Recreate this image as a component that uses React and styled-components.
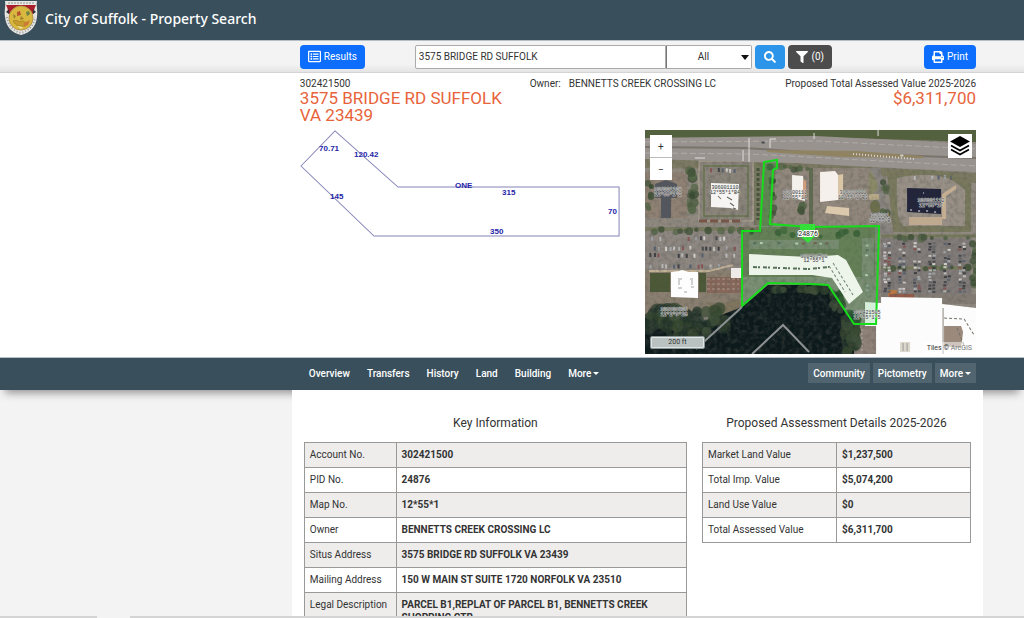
import React, { useState } from 'react';
import styled, { createGlobalStyle } from 'styled-components';
import { FaFilter, FaPrint, FaRegListAlt, FaSearch } from 'react-icons/fa';

const keyInformation = [
  ['Account No.', '302421500'],
  ['PID No.', '24876'],
  ['Map No.', '12*55*1'],
  ['Owner', 'BENNETTS CREEK CROSSING LC'],
  ['Situs Address', '3575 BRIDGE RD SUFFOLK VA 23439'],
  ['Mailing Address', '150 W MAIN ST SUITE 1720 NORFOLK VA 23510'],
  ['Legal Description', 'PARCEL B1,REPLAT OF PARCEL B1, BENNETTS CREEK SHOPPING CTR'],
];

const assessment = [
  ['Market Land Value', '$1,237,500'],
  ['Total Imp. Value', '$5,074,200'],
  ['Land Use Value', '$0'],
  ['Total Assessed Value', '$6,311,700'],
];

const tabs = ['Overview', 'Transfers', 'History', 'Land', 'Building'];

// small repeatable random generator, so the map looks the same on every render
const makeRandom = (seed) => {
  let s = seed * 7919;
  return () => {
    s = (s * 16807) % 2147483647;
    return s / 2147483647;
  };
};

const carColors = ['#d4d2cf', '#bcbcbc', '#45484d', '#566070', '#865453', '#3b3d42', '#a8abb0', '#64676c'];
const treeColors = ['#3f5137', '#4a5d3e', '#364a2f', '#566848'];
const shoreColors = ['#2b3c2b', '#35482f', '#22332a', '#3c4f38'];

const parkCars = (seed, x, y, w, h, dx, dy, fill = 0.6) => {
  const rand = makeRandom(seed);
  const cars = [];
  for (let cy = y; cy < y + h; cy += dy) {
    for (let cx = x; cx < x + w; cx += dx) {
      if (rand() < fill) {
        cars.push({ x: cx + rand(), y: cy + rand(), color: carColors[Math.floor(rand() * carColors.length)] });
      }
    }
  }
  return cars;
};

const plantTrees = (seed, x, y, w, h, count, size, colors = treeColors) => {
  const rand = makeRandom(seed);
  return Array.from({ length: count }, () => ({
    x: x + rand() * w,
    y: y + rand() * h,
    r: size * (0.6 + rand() * 0.7),
    color: colors[Math.floor(rand() * colors.length)],
  }));
};

const wideCars = [
  ...parkCars(11, 2, 106, 92, 4, 4, 6, 0.3),
  ...parkCars(31, 4, 116, 90, 4, 4, 6, 0.7),
  ...parkCars(33, 4, 123, 90, 4, 4, 6, 0.6),
  ...parkCars(35, 4, 134, 90, 4, 4, 6, 0.4),
  ...parkCars(71, 64, 38, 26, 4, 4, 6, 0.7),
  ...parkCars(83, 268, 45, 38, 4, 6, 6, 0.5),
];

const roadCars = [
  ...parkCars(91, 40, 11, 280, 4, 38, 8, 0.5),
  ...parkCars(92, 20, 24, 290, 4, 47, 8, 0.5),
];

const lotCars = [17, 29, 41, 53, 67, 79].flatMap((seed, i) => [
  ...parkCars(seed, 238 + i * 15, 112, 3, 50, 5, 3, 0.75),
  ...parkCars(seed + 5, 242 + i * 15, 112, 3, 50, 5, 3, 0.65),
]);

const mallCars = [
  ...parkCars(99, 108, 112, 90, 4, 6, 6, 0.4),
  ...parkCars(101, 220, 114, 5, 46, 6, 5, 0.4),
];

const trees = [
  ...plantTrees(7, 44, 36, 6, 50, 18, 4),
  ...plantTrees(13, 0, 50, 7, 34, 8, 3),
  ...plantTrees(19, 125, 36, 4, 56, 16, 3),
  ...plantTrees(23, 136, 36, 30, 4, 8, 3),
  ...plantTrees(37, 4, 99, 92, 3, 12, 3),
  ...plantTrees(43, 237, 42, 5, 50, 8, 3),
  ...plantTrees(47, 246, 107, 84, 2, 12, 3),
  ...plantTrees(59, 240, 137, 88, 2, 12, 3),
  ...plantTrees(61, 106, 99, 116, 8, 16, 3),
  ...plantTrees(73, 327, 110, 4, 56, 12, 3),
  ...plantTrees(79, 151, 74, 8, 8, 6, 4),
];

const shoreTrees = [
  ...plantTrees(107, 2, 178, 78, 20, 60, 6, shoreColors),
  ...plantTrees(108, 22, 196, 40, 14, 20, 5, shoreColors),
  ...plantTrees(109, 118, 158, 64, 3, 20, 4, shoreColors),
  ...plantTrees(113, 200, 182, 12, 42, 40, 5, shoreColors),
  ...plantTrees(127, 187, 160, 10, 24, 16, 4, shoreColors),
];

const Cars = ({ items, wide }) => (
  <g>
    {items.map((car, i) => (
      <rect key={i} x={car.x} y={car.y} width={wide ? 3 : 2} height={wide ? 2 : 4} fill={car.color} />
    ))}
  </g>
);

const Trees = ({ items }) => (
  <g>
    {items.map((tree, i) => (
      <circle key={i} cx={tree.x} cy={tree.y} r={tree.r} fill={tree.color} opacity="0.75" />
    ))}
  </g>
);

const CityLogo = () => (
  <LogoSvg viewBox="0 0 34 36" role="img" aria-label="City of Suffolk seal">
    <path d="M1 1h32c-1 5 1 9 0 16-1 10-7 16-16 18C8 33 2 27 1 17 0 10 2 6 1 1z" fill="#e9e7e2" />
    <path d="M2 5h30c-2 3-2 7-3 10H5C4 12 4 8 2 5z" fill="#a81f2b" />
    <path d="M4 3h26" stroke="#8c9094" strokeDasharray="2 1" />
    <path d="M2 14c-1 9 5 17 15 20 10-3 16-11 15-20z" fill="#e4e2df" />
    <circle cx="17" cy="18" r="12" fill="#d9b840" stroke="#b5974a" />
    <path d="M3 17c1 8 6 14 14 16 8-2 13-8 14-16" fill="none" stroke="#9a9c9f" strokeWidth="2" strokeDasharray="1 2" />
    <path d="M13 12l3-1 1 4-4 1z" fill="#b9512f" />
    <path d="M22 12l3-1 1 3-3 2z" fill="#668045" />
    <path d="M9 14l3 2-2 3zM17 16l3 3-4 1z" fill="#9b7f2b" />
    <path d="M9 21c4-2 7 2 10 0l4 2-3 3c-4 1-8 0-11-5z" fill="#c79b2d" stroke="#94781f" strokeWidth="0.600" />
    <path d="M20 23l6-3-2 5-4 2z" fill="#cc7a35" />
    <path d="M13 26l6 1-2 2z" fill="#efe3a8" />
    <path d="M2 12l3-3v5zM32 12l-3-3v5z" fill="#2e3236" />
  </LogoSvg>
);

const BuildingSketch = () => (
  <SketchSvg viewBox="0 0 320 107" role="img" aria-label="Building sketch">
    <path d="M1 36L35 1l63 56h221v49H74z" fill="none" stroke="#8584b8" />
    <g fill="#2525a8" fontFamily='"Liberation Sans", Arial, sans-serif' fontSize="8" fontWeight="700">
      <text x="19" y="21">70.71</text>
      <text x="54" y="27">120.42</text>
      <text x="30" y="69">145</text>
      <text x="155" y="58">ONE</text>
      <text x="202" y="65">315</text>
      <text x="308" y="84">70</text>
      <text x="190" y="104">350</text>
    </g>
  </SketchSvg>
);

const AerialMap = () => (
  <AerialSvg viewBox="0 0 331 224" preserveAspectRatio="xMidYMid slice" role="img" aria-label="Aerial view of the parcel">
    <defs>
      <filter id="grain" x="0" y="0" width="100%" height="100%">
        <feTurbulence type="fractalNoise" baseFrequency="0.22" numOctaves="3" seed="4" />
        <feColorMatrix values="0 0 0 0 0.1  0 0 0 0 0.1  0 0 0 0 0.08  1.500 0 0 0 -0.620" />
      </filter>
    </defs>
    <rect width="331" height="224" fill="#8f8980" />

    {/* ground */}
    <path d="M0 28l150 5 181 10v10L150 40 0 38z" fill="#7c7a62" />
    <path d="M0 42h42v46H0z" fill="#8f8174" />
    <path d="M54 31h54v60H54z" fill="#8a847b" stroke="#b5aa9a" />
    <path d="M59 36h44v50H59z" fill="none" stroke="#6f7858" strokeWidth="2" />
    <path d="M109 33h9v62h-9z" fill="#77795f" />
    <path d="M113 38v52" stroke="#45523a" strokeWidth="3" strokeDasharray="3 2" />
    <path d="M119 34h12l-3 62h-12z" fill="#71805a" />
    <path d="M134 38h94v56h-94z" fill="#91877c" />
    <path d="M166 38v56" stroke="#606b50" strokeWidth="4" />
    <path d="M225 38h10l12 66h-16z" fill="#898581" />
    <path d="M242 42q60-8 84 12v48h-78z" fill="#78795d" />
    <path d="M252 48q38-8 58 4l10 8v36h-62q-8-6-6-48z" fill="#989087" />
    <path d="M0 96h97v44H0z" fill="#8d8681" />
    <path d="M54 91h44" stroke="#7a5546" strokeWidth="3" strokeDasharray="8 3" />
    <path d="M0 99h97" stroke="#7b7c62" strokeWidth="4" />
    <path d="M98 97h132v50H98z" fill="#77785f" />
    <path d="M104 110h90v9h-90zM217 108h12v56h-12z" fill="#8c867d" />
    <path d="M236 108h90v56h-90z" fill="#817b79" />
    <path d="M236 106h95M236 138h90" stroke="#75795a" strokeWidth="3" />
    <path d="M224 40q8 8 9 18-2 6-9 6z" fill="#8a8a68" />
    <path d="M224 64h10v6h-10z" fill="#b7a988" />
    <ellipse cx="230" cy="77" rx="5" ry="7" fill="#6b6f4c" />
    <path d="M0 140h97v46H0z" fill="#8a7f70" />
    <path d="M5 143h20v19H5zM54 143h7v19h-7z" fill="#4b5836" />
    <path d="M62 147h34v16H62z" fill="#86675a" />
    <path d="M62 149h32M62 154h32M62 159h32" stroke="#b09a8d" strokeDasharray="3 2" />
    <path d="M4 141h60l24-6" stroke="#c2b296" strokeWidth="2" fill="none" />
    <path d="M60 171l12 4 22-6 3 8-20 12z" fill="#80765f" />
    <path d="M236 164h95v10h-95z" fill="#837c74" />
    <path d="M243 160h9v6h-9z" fill="#b87742" />
    <path d="M244 164h25v5h-25z" fill="#955b48" />

    {/* water */}
    <path d="M0 188l58 4 39-15 26-22h60l27 41v28H0z" fill="#0d1a1c" />
    <path d="M209 196h22v28h-22z" fill="#8f8279" />
    <path d="M212 199v24M217 199v24" stroke="#b8aea5" strokeDasharray="2 2" />

    <Trees items={trees} />
    <Trees items={shoreTrees} />
    <Cars items={wideCars} />
    <Cars items={lotCars} wide />
    <Cars items={mallCars} wide />
    <rect width="331" height="224" filter="url(#grain)" opacity="0.6" />

    {/* highway */}
    <path d="M0 0h331v12L170 7 0 8z" fill="#54613f" />
    <path d="M0 8l170-2 161 8v28L150 33 0 29z" fill="#98938f" />
    <path d="M0 17l100 1 60 4 171 6" stroke="#7a746d" strokeWidth="2" fill="none" />
    <path d="M122 21l90 1 66 5-80-1z" fill="#8f8362" stroke="#8f8362" strokeWidth="2" />
    <path d="M0 12l170-1 161 8M0 23l105 1 226 12" stroke="#aeaaa6" fill="none" strokeDasharray="6 3" />
    <path d="M208 24l62 5" stroke="#d8d4cf" strokeWidth="2" strokeDasharray="1 2" />
    <path d="M104 8v24M98 20v11M125 9h6M125 9v9M169 3v6M50 28h10M233 0v6" stroke="#e0dedb" fill="none" />
    <Cars items={roadCars} wide />

    {/* buildings */}
    <path d="M10 54l11-4 11 4v14h-6v20H16V68h-6z" fill="#54565d" />
    <path d="M66 53l28 1-1 26-8-2-19-1z" fill="#f6f5f3" />
    <path d="M73 66l3 3M82 67l5 3M85 73l4 3M88 78l3 1" stroke="#68645f" />
    <path d="M147 45l11 1 2 25-8-2-5-2z" fill="#f4f0eb" />
    <path d="M158 50l3 1v18h-3z" fill="#cf9d7c" />
    <path d="M175 42l15-1 3 4v25l-18 2z" fill="#f5f0eb" />
    <path d="M193 45l5-1v20l-5 6z" fill="#dac6a6" />
    <path d="M182 76l22 2v8l-24-3z" fill="#dcc9ad" />
    <path d="M262 58l34 1v25l-34-2z" fill="#23263b" />
    <path d="M264 87h33v8h-33z" fill="#bfa98f" />
    <path d="M297 64l14-9v4l-10 7v23h-4z" fill="#c4ae91" />
    <path d="M265 80h2M273 81h2M281 81h2M289 82h2M278 63h1" stroke="#eee" />
    <path d="M26 142l8-1 3-1 7 2h9v26l-27-1z" fill="#fdfdfd" />
    <path d="M33 149h4M45 149h3M33 158h4M39 162h3M46 157h3M34 150v5M47 150v5" stroke="#a5a5a5" />
    <path d="M86 138h12v10H86z" fill="#eeeae8" />
    <path d="M220 172l16 1v-6l61 1v6l34 4v46H231v-28h-11z" fill="#fcfcfc" />
    <path d="M298 178v46" stroke="#8b857d" />
    <path d="M299 196h17l2 6-2 16-17-2z" fill="#9b897b" />
    <path d="M299 188l20 1 10 16M312 198l8 20" stroke="#747069" fill="none" strokeDasharray="3 2" />
    <path d="M255 212h10v10h-10z" fill="#ddd8cc" />
    <path d="M258 213v8M262 213v8" stroke="#999" />

    {/* parcel outline */}
    <path
      d="M119 32l13-2v8l-4 2-3 54 40 3 69-1-3 98h-22l-26-39-18-1-42-1-26 23V101h18z"
      fill="#0fae30"
      fillOpacity="0.16"
    />
    <path d="M104 124l60 3 29-2 8 5 17 32-14 12-17-26-20-3h-63z" fill="#edf5ea" />
    <path d="M108 137l56 2 20-2" stroke="#57715a" strokeWidth="2" fill="none" strokeDasharray="4 1 2 3" />
    <path d="M188 133l20 32M184 136l16 26" stroke="#6d846f" fill="none" strokeDasharray="3 2" />
    <path
      d="M119 32l13-2v8l-4 2-3 54 40 3 69-1-3 98h-22l-26-39-18-1-42-1-26 23V101h18z"
      fill="none"
      stroke="#16dc1c"
      strokeWidth="2"
    />
    <path d="M97 177l-46 42M107 224l31-29 26 27" stroke="#8d9192" strokeWidth="2" fill="none" />

    {/* parcel numbers */}
    <g fill="#3a3e40" stroke="#e4e4e4" strokeWidth="0.600" paintOrder="stroke" fontFamily='"Liberation Mono", monospace' fontSize="5" textAnchor="middle">
      <text x="23" y="61">306001108</text>
      <text x="23" y="66">12*55*1*2</text>
      <text x="80" y="59">306001110</text>
      <text x="80" y="64">12*55*1*B4</text>
      <text x="150" y="64">30600111</text>
      <text x="150" y="69">12*55*1A</text>
      <text x="208" y="64">306001111</text>
      <text x="208" y="69">12*55*1*B2</text>
      <text x="235" y="87">306001</text>
      <text x="235" y="92">12*55*B</text>
      <text x="286" y="72">306001112</text>
      <text x="286" y="77">12*55*1C</text>
      <text x="169" y="128">302421500</text>
      <text x="169" y="132">12*55*1</text>
      <text x="29" y="181">303909806</text>
      <text x="29" y="186">12*2*9*2G</text>
      <text x="222" y="184">302421505</text>
      <text x="222" y="189">12*55*1*5</text>
    </g>
    <path d="M155 94h15v12l-7 7-8-7z" fill="#35df3a" />
    <text x="163" y="106" textAnchor="middle" fontFamily="Roboto, sans-serif" fontSize="7" fill="#222" stroke="#fff" strokeWidth="2" paintOrder="stroke">
      24876
    </text>
  </AerialSvg>
);

const RecordTable = ({ title, rows, labelWidth }) => (
  <section>
    <SectionTitle>{title}</SectionTitle>
    <Table>
      <tbody>
        {rows.map(([label, value]) => (
          <tr key={label}>
            <LabelCell scope="row" $width={labelWidth}>{label}</LabelCell>
            <ValueCell>{value}</ValueCell>
          </tr>
        ))}
      </tbody>
    </Table>
  </section>
);

const App = () => {
  const [query, setQuery] = useState('3575 BRIDGE RD SUFFOLK');
  const [scope, setScope] = useState('All');

  return (
    <Page>
      <GlobalStyle />
      <Header>
        <CityLogo />
        <SiteTitle>City of Suffolk - Property Search</SiteTitle>
      </Header>

      <Toolbar>
        <div>
          <PrimaryButton type="button">
            <FaRegListAlt size={13} />
            Results
          </PrimaryButton>
        </div>
        <SearchForm onSubmit={(e) => e.preventDefault()}>
          <SearchInput aria-label="Search" value={query} onChange={(e) => setQuery(e.target.value)} />
          <SelectWrap>
            <ScopeSelect aria-label="Search in" value={scope} onChange={(e) => setScope(e.target.value)}>
              <option>All</option>
              <option>Owner</option>
              <option>Address</option>
            </ScopeSelect>
            <SelectArrow />
          </SelectWrap>
          <SearchButton type="submit" aria-label="Search">
            <FaSearch size={12} />
          </SearchButton>
          <FilterButton type="button">
            <FaFilter size={12} />
            (0)
          </FilterButton>
        </SearchForm>
        <PrintWrap>
          <PrimaryButton type="button">
            <FaPrint size={12} />
            Print
          </PrimaryButton>
        </PrintWrap>
      </Toolbar>

      <Summary>
        <Facts>
          <div>
            <Small>302421500</Small>
            <Highlight>3575 BRIDGE RD SUFFOLK VA 23439</Highlight>
          </div>
          <OwnerLine>
            <span>Owner:</span>
            <span>BENNETTS CREEK CROSSING LC</span>
          </OwnerLine>
          <ValueBlock>
            <Small>Proposed Total Assessed Value 2025-2026</Small>
            <Highlight as="p">$6,311,700</Highlight>
          </ValueBlock>
        </Facts>
        <Media>
          <BuildingSketch />
          <MapFrame>
            <AerialMap />
            <ZoomControls>
              <ZoomButton type="button" aria-label="Zoom in">+</ZoomButton>
              <ZoomButton type="button" aria-label="Zoom out">−</ZoomButton>
            </ZoomControls>
            <LayersButton type="button" aria-label="Layers">
              <svg viewBox="0 0 22 22" width="22" height="22">
                <path d="M11 1l10 5.500-10 5.500L1 6.500z" fill="#000" />
                <path d="M2 10.500l9 5 9-5M2 14.500l9 5 9-5" fill="none" stroke="#000" strokeWidth="1.800" />
              </svg>
            </LayersButton>
            <ScaleBar>200 ft</ScaleBar>
            <Attribution>
              Tiles © <a href="#arcgis">ArcGIS</a>
            </Attribution>
          </MapFrame>
        </Media>
      </Summary>

      <NavBar>
        <NavGroup>
          {tabs.map((tab) => (
            <NavLink key={tab} href={`#${tab.toLowerCase()}`}>{tab}</NavLink>
          ))}
          <NavButton type="button">More<Caret /></NavButton>
        </NavGroup>
        <ToolGroup>
          <ToolButton type="button">Community</ToolButton>
          <ToolButton type="button">Pictometry</ToolButton>
          <ToolButton type="button">More<Caret /></ToolButton>
        </ToolGroup>
      </NavBar>

      <Details>
        <Panel>
          <RecordTable title="Key Information" rows={keyInformation} labelWidth="24%" />
          <RecordTable title="Proposed Assessment Details 2025-2026" rows={assessment} labelWidth="50%" />
        </Panel>
      </Details>
      <BottomStrip>
        <StripGap />
      </BottomStrip>
    </Page>
  );
};

export default App;

const GlobalStyle = createGlobalStyle`
  *, *::before, *::after {
    box-sizing: border-box;
  }

  body {
    margin: 0;
    background: #f3f3f3;
    color: #333;
    font-family: Roboto, "Liberation Sans", sans-serif;
    font-size: 10px;
  }

  button, input, select {
    font: inherit;
    color: inherit;
    margin: 0;
  }

  h1, h2, p {
    margin: 0;
    font-weight: 400;
  }
`;

const Page = styled.div`
  display: flex;
  flex-direction: column;
  height: 100vh;
  overflow: hidden;
`;

const Header = styled.header`
  display: flex;
  align-items: center;
  gap: 7px;
  flex: none;
  height: 40px;
  padding: 0 4px 4px;
  background: #394f5c;
  color: #fff;
`;

const LogoSvg = styled.svg`
  width: 34px;
  height: 36px;
`;

const SiteTitle = styled.h1`
  font-family: "Noto Sans", "Open Sans", sans-serif;
  font-size: 14px;
  font-weight: 500;
`;

const Toolbar = styled.div`
  display: grid;
  grid-template-columns: 17% 62% 1fr;
  align-items: center;
  flex: none;
  height: 33px;
  padding: 0 48px 0 calc(28.5% + 8px);
  border-top: 1px solid #b5bfc8;
  border-bottom: 1px solid #d4d4d4;
  background: linear-gradient(#f3f3f3 75%, #e4e4e4);
`;

const BaseButton = styled.button`
  display: inline-flex;
  align-items: center;
  justify-content: center;
  gap: 3px;
  height: 24px;
  padding: 0 8px;
  border: 0;
  border-radius: 4px;
  color: #fff;
  cursor: pointer;
`;

const PrimaryButton = styled(BaseButton)`
  background: #0d6efd;
`;

const SearchForm = styled.form`
  display: flex;
  padding-right: 2px;
`;

const SearchInput = styled.input`
  flex: 1;
  min-width: 0;
  height: 24px;
  padding: 0 3px;
  border: 1px solid #aaa;
  border-radius: 2px 0 0 2px;
  background: #fff;
`;

const SelectWrap = styled.div`
  position: relative;
  flex: 0 0 86px;
`;

const ScopeSelect = styled.select`
  appearance: none;
  width: 100%;
  height: 24px;
  padding: 0 12px 0 0;
  border: 1px solid #aaa;
  border-left-color: #777;
  border-radius: 0 2px 2px 0;
  background: #fff;
  text-align: center;
  text-align-last: center;
`;

const SelectArrow = styled.span`
  position: absolute;
  top: 10px;
  right: 3px;
  border: 4px solid transparent;
  border-top: 5px solid #111;
  border-bottom: 0;
  pointer-events: none;
`;

const SearchButton = styled(BaseButton)`
  width: 30px;
  margin: 0 3px;
  background: #2d95e9;
`;

const FilterButton = styled(BaseButton)`
  background: #4c4c4c;
`;

const PrintWrap = styled.div`
  text-align: right;
`;

const Summary = styled.main`
  flex: none;
  padding: 4px 48px 3px calc(28.5% + 8px);
  background: #fff;
`;

const Facts = styled.div`
  display: grid;
  grid-template-columns: 34% 1fr auto;
  min-height: 53px;
`;

const Small = styled.p`
  line-height: 13px;
`;

const Highlight = styled.h2`
  max-width: 220px;
  font-size: 17px;
  line-height: 17px;
  color: #e8633a;
`;

const OwnerLine = styled.p`
  display: flex;
  gap: 8px;
  line-height: 13px;
`;

const ValueBlock = styled.div`
  text-align: right;
`;

const Media = styled.div`
  display: grid;
  grid-template-columns: 320fr 331fr;
  gap: 25px;
  align-items: start;
`;

const SketchSvg = styled.svg`
  display: block;
  width: 100%;
`;

const MapFrame = styled.div`
  position: relative;
  height: 224px;
  overflow: hidden;
`;

const AerialSvg = styled.svg`
  display: block;
  width: 100%;
  height: 100%;
`;

const ZoomControls = styled.div`
  position: absolute;
  top: 5px;
  left: 5px;
  display: flex;
  flex-direction: column;
  gap: 1px;
  background: #bbb;
`;

const ZoomButton = styled.button`
  width: 22px;
  height: 22px;
  padding: 0;
  border: 0;
  background: #fff;
  cursor: pointer;
`;

const LayersButton = styled.button`
  position: absolute;
  top: 4px;
  right: 4px;
  display: grid;
  place-items: center;
  width: 24px;
  height: 24px;
  padding: 0;
  border: 0;
  background: #fff;
  cursor: pointer;
`;

const ScaleBar = styled.div`
  position: absolute;
  bottom: 5px;
  left: 5px;
  width: 55px;
  border: 1px solid #8c9595;
  border-radius: 2px;
  background: #b9c2c1;
  box-shadow: inset 0 0 0 1px #dfe4e4;
  font-size: 7px;
  line-height: 11px;
  text-align: center;
`;

const Attribution = styled.div`
  position: absolute;
  right: 0;
  bottom: 0;
  padding: 0 4px;
  background: rgba(255, 255, 255, 0.5);
  font-size: 7px;
  line-height: 12px;

  a {
    color: #777;
    text-decoration: none;
  }
`;

const NavBar = styled.nav`
  display: flex;
  justify-content: space-between;
  align-items: center;
  flex: none;
  height: 33px;
  padding: 0 48px 2px calc(28.5% + 8px);
  border-top: 1px solid #b5bfc8;
  background: #394f5c;
  box-shadow: 0 8px 8px -5px rgba(0, 0, 0, 0.4);
  color: #fff;
  font-weight: 500;
`;

const NavGroup = styled.div`
  display: flex;
  gap: 17px;
  padding-left: 9px;
`;

const NavLink = styled.a`
  color: inherit;
  text-decoration: none;
`;

const NavButton = styled.button`
  display: flex;
  align-items: center;
  gap: 2px;
  padding: 0;
  border: 0;
  background: none;
  cursor: pointer;
`;

const ToolGroup = styled.div`
  display: flex;
  gap: 3px;
`;

const ToolButton = styled(NavButton)`
  height: 20px;
  padding: 0 5px;
  background: #50656f;
`;

const Caret = styled.span`
  border: 3px solid transparent;
  border-top-color: currentColor;
  border-bottom: 0;
`;

const Details = styled.div`
  display: flex;
  flex: 1;
  min-height: 0;
  padding: 0 4% 0 28.5%;
  overflow: hidden;
`;

const Panel = styled.div`
  display: grid;
  grid-template-columns: 383fr 269fr;
  gap: 15px;
  align-items: start;
  flex: 1;
  padding: 0 12px;
  background: #fff;
`;

const SectionTitle = styled.h2`
  padding: 24px 0 10px;
  font-size: 12px;
  line-height: 18px;
  text-align: center;
`;

const Table = styled.table`
  width: 100%;
  border-collapse: collapse;
  table-layout: fixed;

  tr:nth-child(odd) {
    background: #eeedec;
  }

  th, td {
    padding: 5px 5px 6px;
    border: 1px solid #999;
    line-height: 13px;
    text-align: left;
    vertical-align: top;
  }
`;

const LabelCell = styled.th`
  width: ${(props) => props.$width};
  font-weight: 400;
`;

const ValueCell = styled.td`
  font-weight: 700;
`;

const BottomStrip = styled.div`
  display: flex;
  flex: none;
  height: 2px;
  background: #d4d4d4;
`;

const StripGap = styled.span`
  width: 33px;
  margin-left: 97px;
  background: #f3f3f3;
`;
